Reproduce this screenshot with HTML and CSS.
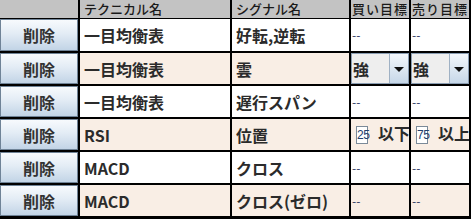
FILE: index.html
```html
<html>
<head>
<meta charset="utf-8">
<title>シグナル設定</title>
<link rel="stylesheet" href="styles.css">
</head>
<body>
<table class="grid">
  <colgroup>
    <col class="c-del"><col class="c-tech"><col class="c-sig"><col class="c-buy"><col class="c-sell">
  </colgroup>
  <thead>
    <tr>
      <th></th>
      <th>テクニカル名</th>
      <th>シグナル名</th>
      <th>買い目標</th>
      <th>売り目標</th>
    </tr>
  </thead>
  <tbody>
    <tr class="odd">
      <td class="btncell"><div class="button">削除</div></td>
      <td>一目均衡表</td>
      <td>好転,逆転</td>
      <td class="none">--</td>
      <td class="none">--</td>
    </tr>
    <tr class="even">
      <td class="btncell"><div class="button">削除</div></td>
      <td>一目均衡表</td>
      <td>雲</td>
      <td class="combocell"><div class="combo"><span class="combotext">強</span><span class="arrow"><i></i></span></div></td>
      <td class="combocell"><div class="combo"><span class="combotext">強</span><span class="arrow"><i></i></span></div></td>
    </tr>
    <tr class="odd">
      <td class="btncell"><div class="button">削除</div></td>
      <td>一目均衡表</td>
      <td>遅行スパン</td>
      <td class="none">--</td>
      <td class="none">--</td>
    </tr>
    <tr class="even">
      <td class="btncell"><div class="button">削除</div></td>
      <td>RSI</td>
      <td>位置</td>
      <td class="target"><span class="nicefield">25</span>以下</td>
      <td class="target"><span class="nicefield">75</span>以上</td>
    </tr>
    <tr class="odd">
      <td class="btncell"><div class="button">削除</div></td>
      <td>MACD</td>
      <td>クロス</td>
      <td class="none">--</td>
      <td class="none">--</td>
    </tr>
    <tr class="even last">
      <td class="btncell"><div class="button">削除</div></td>
      <td>MACD</td>
      <td>クロス(ゼロ)</td>
      <td class="none">--</td>
      <td class="none">--</td>
    </tr>
  </tbody>
</table>
</body>
</html>
```

FILE: styles.css
```css
body {
    margin: 0;
    background: #ffffff;
    font-family: "Noto Sans CJK JP", "DejaVu Sans", sans-serif;
    font-size: 13px;
    color: #2b2b2b;
}
.grid {
    width: 471px;
    table-layout: fixed;
    border-collapse: separate;
    border-spacing: 0;
}
.c-del  { width: 80px; }
.c-tech { width: 152px; }
.c-sig  { width: 119px; }
.c-buy  { width: 60px; }
.c-sell { width: 60px; }

.grid th {
    height: 19px;
    padding: 0 0 0 4px;
    background: #c3c3c3;
    border-right: 2px solid #000;
    border-bottom: 1px solid #000;
    text-align: left;
    font-weight: 500;
    font-size: 13px;
    line-height: 18px;
    color: #1a1a1a;
    white-space: nowrap;
    overflow: hidden;
}
.grid th:nth-child(4), .grid th:nth-child(5) {
    padding-left: 1px;
    letter-spacing: 1px;
}
.grid td {
    height: 33px;
    padding: 0 0 0 4px;
    border-right: 2px solid #000;
    border-bottom: 2px solid #000;
    font-weight: bold;
    white-space: nowrap;
    overflow: hidden;
    line-height: 16px;
}
.grid tbody tr:first-child td { height: 34px; }
.grid tr.last td { border-bottom-width: 3px; height: 34px; }
.odd td  { background: #ffffff; }
.even td { background: #f9eee5; }

.grid td.btncell { padding: 0; }
.button {
    height: 100%;
    box-sizing: border-box;
    display: flex;
    align-items: center;
    justify-content: center;
    border: 1px solid #6f8397;
    background: linear-gradient(#f7fafd, #e3ecf5 45%, #c2d4e6);
    color: #333;
    font-weight: bold;
}
.grid td.none {
    padding-left: 1px;
    font-weight: normal;
    font-size: 12px;
    color: #2c3560;
}
.grid td.combocell { padding: 0; }
.combo {
    height: 100%;
    box-sizing: border-box;
    display: flex;
    border: 1px solid #8a9db2;
    background: #eeeeee;
}
.combotext {
    flex: 1;
    display: flex;
    align-items: center;
    padding-left: 1px;
}
.arrow {
    width: 18px;
    display: flex;
    align-items: center;
    justify-content: center;
    border-left: 1px solid #9fb1c4;
    background: linear-gradient(#f4f8fc, #c6d7e8);
}
.arrow i {
    width: 0;
    height: 0;
    border-left: 5px solid transparent;
    border-right: 5px solid transparent;
    border-top: 5px solid #111;
    margin-top: 1px;
}
.grid td.target { padding-left: 5px; }
.nicefield {
    display: inline-block;
    vertical-align: middle;
    width: 10px;
    height: 16px;
    line-height: 16px;
    border: 1px solid #7b8a99;
    background: #fff;
    font-family: "Liberation Sans Narrow", "Liberation Sans", sans-serif;
    font-weight: normal;
    font-size: 12px;
    color: #24406e;
    text-align: center;
    letter-spacing: -0.5px;
    margin-right: 10px;
    margin-top: -2px;
}
```
